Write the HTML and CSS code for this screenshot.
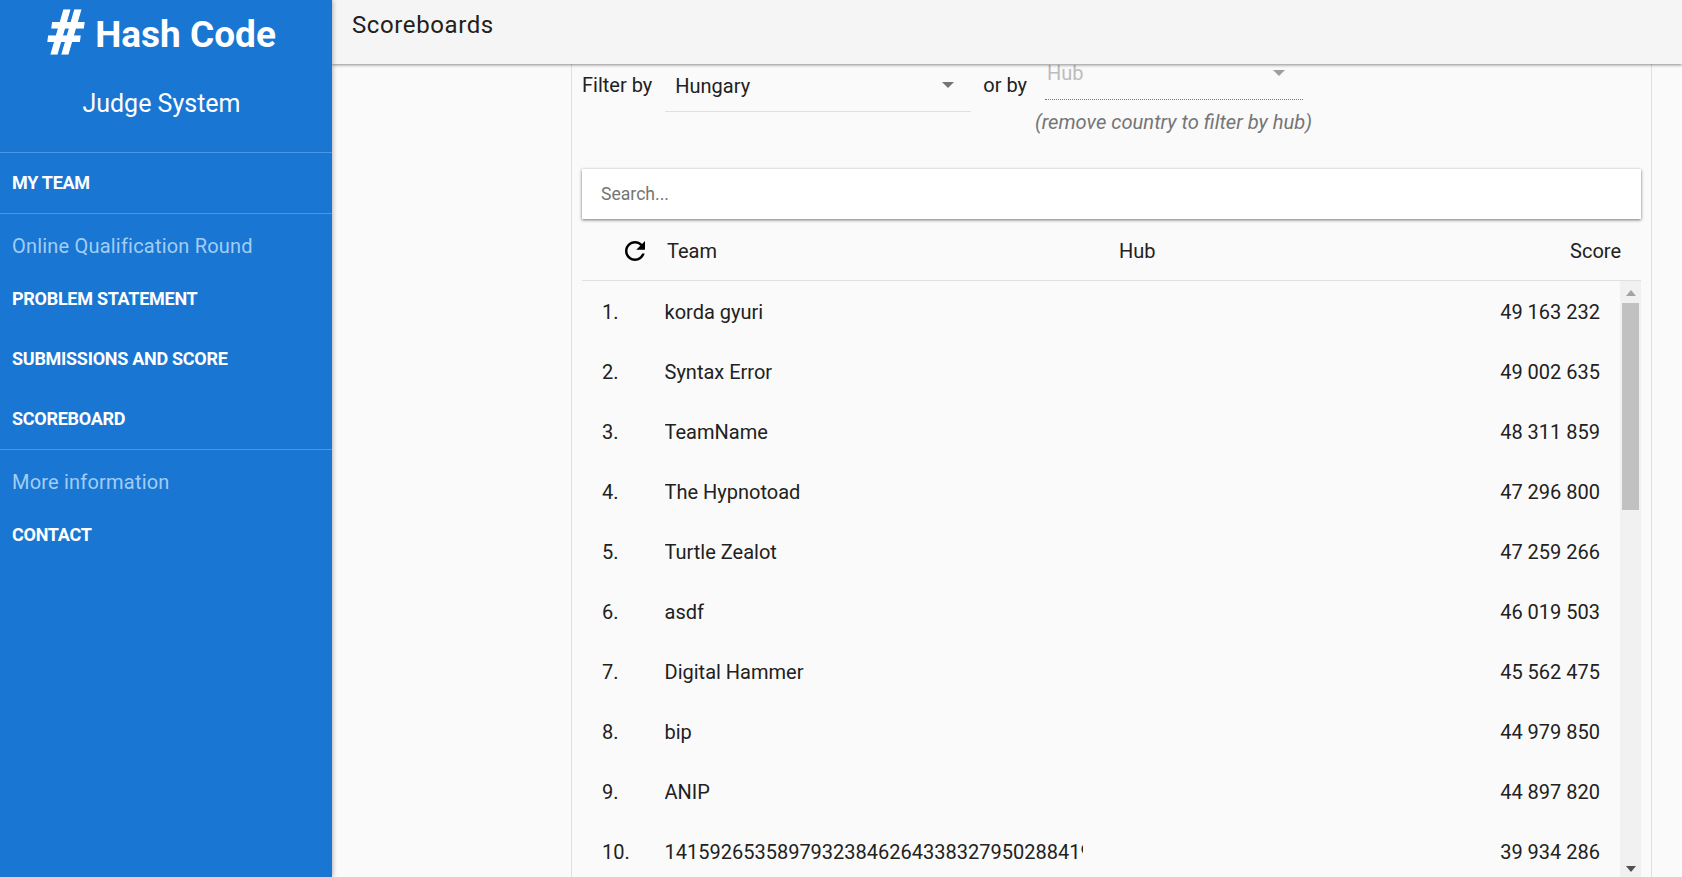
FILE: index.html
```html
<!DOCTYPE html>
<html lang="en">
<head>
  <meta charset="UTF-8" />
  <meta name="viewport" content="width=device-width, initial-scale=1.0"/>
  <title>Scoreboards – Hash Code Judge System</title>
  <link rel="stylesheet" href="styles.css">
</head>
<body>

  <aside class="sidebar">
    <div class="brand">
      <div class="logo"><span class="logo-mark">#</span><span class="logo-name">Hash Code</span></div>
      <div class="brand-sub">Judge System</div>
    </div>

    <nav>
      <div class="nav-group">
        <a class="nav-link" href="#">MY TEAM</a>
      </div>
      <div class="nav-group">
        <div class="nav-title">Online Qualification Round</div>
        <a class="nav-link" href="#">PROBLEM STATEMENT</a>
        <a class="nav-link" href="#">SUBMISSIONS AND SCORE</a>
        <a class="nav-link" href="#">SCOREBOARD</a>
      </div>
      <div class="nav-group nav-last">
        <div class="nav-title">More information</div>
        <a class="nav-link" href="#">CONTACT</a>
      </div>
    </nav>
  </aside>

  <div class="main">
    <header class="topbar">Scoreboards</header>

    <div class="content">
      <section class="card">

        <div class="filters">
          <span class="filter-label">Filter by</span>
          <div class="select select-country">
            <span>Hungary</span>
            <i class="caret"></i>
          </div>
          <span class="filter-label filter-or">or by</span>
          <div class="hub-box">
            <div class="select select-hub">
              <span>Hub</span>
              <i class="caret"></i>
            </div>
            <div class="hub-note">(remove country to filter by hub)</div>
          </div>
        </div>

        <div class="search">Search...</div>

        <div class="table-head">
          <svg class="refresh" viewBox="0 0 24 24"><path d="M17.65 6.35C16.2 4.9 14.21 4 12 4c-4.42 0-7.99 3.58-7.99 8s3.57 8 7.99 8c3.73 0 6.84-2.55 7.73-6h-2.08c-.82 2.33-3.04 4-5.65 4-3.31 0-6-2.69-6-6s2.69-6 6-6c1.66 0 3.14.69 4.22 1.78L13 11h7V4l-2.35 2.35z"/></svg>
          <span class="head-team">Team</span>
          <span class="head-hub">Hub</span>
          <span class="head-score">Score</span>
        </div>

        <div class="table-body">
          <div class="rows">
            <div class="row"><span class="rank">1.</span><span class="team">korda gyuri</span><span class="score">49 163 232</span></div>
            <div class="row"><span class="rank">2.</span><span class="team">Syntax Error</span><span class="score">49 002 635</span></div>
            <div class="row"><span class="rank">3.</span><span class="team">TeamName</span><span class="score">48 311 859</span></div>
            <div class="row"><span class="rank">4.</span><span class="team">The Hypnotoad</span><span class="score">47 296 800</span></div>
            <div class="row"><span class="rank">5.</span><span class="team">Turtle Zealot</span><span class="score">47 259 266</span></div>
            <div class="row"><span class="rank">6.</span><span class="team">asdf</span><span class="score">46 019 503</span></div>
            <div class="row"><span class="rank">7.</span><span class="team">Digital Hammer</span><span class="score">45 562 475</span></div>
            <div class="row"><span class="rank">8.</span><span class="team">bip</span><span class="score">44 979 850</span></div>
            <div class="row"><span class="rank">9.</span><span class="team">ANIP</span><span class="score">44 897 820</span></div>
            <div class="row"><span class="rank">10.</span><span class="team">14159265358979323846264338327950288419716939</span><span class="score">39 934 286</span></div>
          </div>
          <div class="scrollbar">
            <i class="arrow-up"></i>
            <div class="thumb"></div>
            <i class="arrow-down"></i>
          </div>
        </div>

      </section>
    </div>
  </div>

</body>
</html>
```

FILE: styles.css
```css
html, body {
  height: 100%;
}

body {
  margin: 0;
  display: flex;
  height: 100vh;
  overflow: hidden;
  font-family: 'Roboto', sans-serif;
  background: #fafafa;
  color: #212121;
}

/* sidebar */

.sidebar {
  width: 332px;
  flex-shrink: 0;
  background: #1976d2;
  color: #fff;
  box-shadow: 0 0 5px rgba(0, 0, 0, 0.4);
  z-index: 2;
}

.brand {
  height: 152px;
  border-bottom: 1px solid #4b97e4;
  text-align: center;
}

.logo {
  display: flex;
  align-items: center;
  justify-content: center;
  height: 66px;
  gap: 11px;
  padding-right: 8px;
}

.logo-mark {
  font-size: 62px;
  font-weight: 900;
  line-height: 66px;
  -webkit-text-stroke: 1px #fff;
  transform: skewX(-7deg);
}

.logo-name {
  font-size: 37px;
  font-weight: 700;
  margin-top: 3px;
}

.brand-sub {
  font-size: 25px;
  margin-top: 23px;
  padding-right: 9px;
}

.nav-group {
  border-bottom: 1px solid #4b97e4;
}

.nav-last {
  border-bottom: none;
}

.nav-title {
  height: 60px;
  line-height: 64px;
  padding-left: 12px;
  font-size: 20px;
  letter-spacing: 0.2px;
  color: #a3cdf5;
}

.nav-link {
  display: block;
  height: 60px;
  line-height: 60px;
  padding-left: 12px;
  font-size: 18px;
  font-weight: 700;
  letter-spacing: -0.28px;
  color: #fff;
  text-decoration: none;
}

.nav-group .nav-title + .nav-link {
  margin-top: -5px;
}

/* main */

.main {
  flex: 1;
  min-width: 0;
  display: flex;
  flex-direction: column;
}

.topbar {
  height: 64px;
  flex-shrink: 0;
  background: #f5f5f5;
  box-shadow: 0 1px 3px rgba(0, 0, 0, 0.45);
  padding: 9px 0 0 20px;
  box-sizing: border-box;
  font-size: 24px;
  letter-spacing: 0.6px;
  line-height: 32px;
  z-index: 1;
}

.content {
  flex: 1;
  min-height: 0;
  overflow: hidden;
  padding: 0 30px 0 239px;
}

.card {
  height: 100%;
  border-left: 1px solid #e0e0e0;
  border-right: 1px solid #e0e0e0;
  padding: 0 10px;
  box-sizing: border-box;
  display: flex;
  flex-direction: column;
}

/* filters */

.filters {
  height: 105px;
  flex-shrink: 0;
  display: flex;
  align-items: flex-start;
  font-size: 20px;
}

.filter-label {
  margin-top: 9px;
  line-height: 24px;
}

.select {
  position: relative;
  box-sizing: border-box;
}

.caret {
  position: absolute;
  width: 0;
  height: 0;
  border-left: 6px solid transparent;
  border-right: 6px solid transparent;
  border-top: 6px solid #757575;
}

.select-country {
  width: 306px;
  height: 48px;
  margin-left: 13px;
  padding: 10px 0 0 10px;
  line-height: 24px;
  border-bottom: 1px solid #e0e0e0;
}

.select-country .caret {
  right: 17px;
  top: 18px;
}

.filter-or {
  margin-left: 12px;
}

.hub-box {
  margin-left: 18px;
}

.select-hub {
  width: 258px;
  height: 36px;
  padding-left: 2px;
  line-height: 24px;
  color: #bdbdbd;
  border-bottom: 1px dotted #757575;
}

.select-hub span {
  position: relative;
  top: -3px;
}

.select-hub .caret {
  right: 18px;
  top: 6px;
  border-top-color: #9e9e9e;
}

.hub-note {
  margin: 10px 0 0 -10px;
  line-height: 24px;
  font-size: 20.15px;
  font-style: italic;
  color: #757575;
  white-space: nowrap;
}

/* search box */

.search {
  height: 50px;
  flex-shrink: 0;
  background: #fff;
  box-shadow: 0 1px 3px rgba(0, 0, 0, 0.55);
  padding-left: 19px;
  line-height: 50px;
  font-size: 17.6px;
  color: #757575;
}

/* table */

.table-head {
  height: 62px;
  flex-shrink: 0;
  display: flex;
  align-items: center;
  box-sizing: border-box;
  border-bottom: 1px solid #e0e0e0;
  font-size: 20px;
  padding: 2px 20px 0 38px;
}

.refresh {
  width: 30px;
  height: 30px;
  flex-shrink: 0;
}

.head-team {
  margin-left: 17px;
  width: 452px;
}

.head-hub {
  flex: 1;
}

.table-body {
  flex: 1;
  min-height: 0;
  display: flex;
  overflow: hidden;
}

.rows {
  flex: 1;
  min-width: 0;
  padding-top: 1px;
}

.row {
  display: flex;
  height: 60px;
  align-items: center;
  font-size: 20px;
  padding: 0 20px 0 20px;
}

.rank {
  width: 62.5px;
  flex-shrink: 0;
}

.team {
  width: 418.5px;
  flex-shrink: 0;
  overflow: hidden;
  white-space: nowrap;
}

.score {
  margin-left: auto;
}

.scrollbar {
  width: 21px;
  flex-shrink: 0;
  background: #f1f1f1;
  display: flex;
  flex-direction: column;
  align-items: center;
  padding-top: 9px;
  padding-bottom: 5px;
  box-sizing: border-box;
}

.thumb {
  width: 17px;
  height: 207px;
  margin-top: 7px;
  background: #c1c1c1;
}

.arrow-up {
  width: 0;
  height: 0;
  border-left: 5px solid transparent;
  border-right: 5px solid transparent;
  border-bottom: 6px solid #a3a3a3;
}

.arrow-down {
  width: 0;
  height: 0;
  margin-top: auto;
  border-left: 5px solid transparent;
  border-right: 5px solid transparent;
  border-top: 6px solid #505050;
}
```
